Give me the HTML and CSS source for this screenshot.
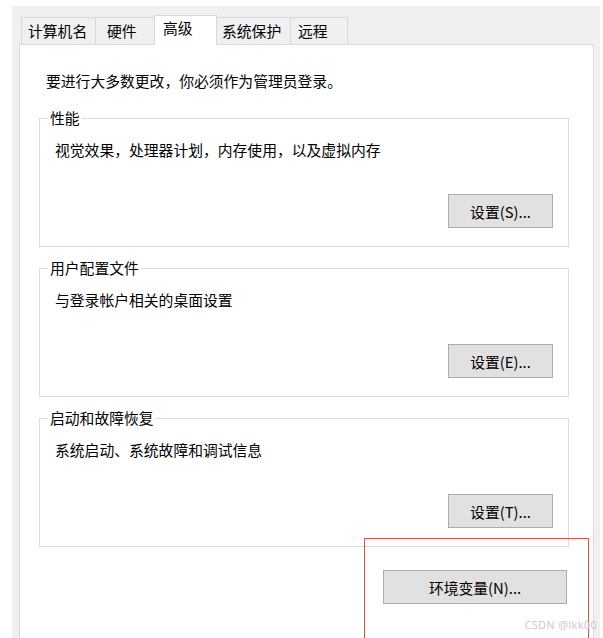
FILE: index.html
```html
<!DOCTYPE html>
<html lang="zh-CN">
<head>
    <meta charset="UTF-8">
    <meta name="viewport" content="width=device-width, initial-scale=1.0">
    <title>系统属性 - 高级</title>
    <link rel="stylesheet" href="styles.css">
</head>
<body>
    <div class="dialog">
        <div class="tabs">
            <div class="tab tab-name">计算机名</div>
            <div class="tab tab-hw">硬件</div>
            <div class="tab tab-adv active">高级</div>
            <div class="tab tab-prot">系统保护</div>
            <div class="tab tab-remote">远程</div>
        </div>

        <div class="panel">
            <p class="notice">要进行大多数更改，你必须作为管理员登录。</p>

            <fieldset class="group">
                <legend>性能</legend>
                <p class="desc">视觉效果，处理器计划，内存使用，以及虚拟内存</p>
                <div class="actions">
                    <button type="button" class="btn">设置(S)...</button>
                </div>
            </fieldset>

            <fieldset class="group">
                <legend>用户配置文件</legend>
                <p class="desc">与登录帐户相关的桌面设置</p>
                <div class="actions">
                    <button type="button" class="btn">设置(E)...</button>
                </div>
            </fieldset>

            <fieldset class="group">
                <legend>启动和故障恢复</legend>
                <p class="desc">系统启动、系统故障和调试信息</p>
                <div class="actions">
                    <button type="button" class="btn">设置(T)...</button>
                </div>
            </fieldset>

            <div class="env-row">
                <button type="button" class="btn btn-env">环境变量(N)...</button>
            </div>
        </div>
    </div>

    <div class="highlight"></div>
    <div class="watermark">CSDN @lkk00</div>
</body>
</html>
```

FILE: styles.css
```css
body {
    margin: 0;
    height: 638px;
    overflow: hidden;
    background: #ffffff;
    font-family: "Noto Sans CJK SC", "Microsoft YaHei", sans-serif;
    font-size: 14.8px;
    color: #000000;
}
.dialog {
    margin: 6px 0 0 12px;
    width: 588px;
    height: 632px;
    padding: 11px 0 0 7px;
    box-sizing: border-box;
    background: #f0f0f0;
    overflow: hidden;
}
.tabs {
    display: flex;
    align-items: flex-end;
    height: 27px;
    padding-left: 2px;
}
.tab {
    height: 27px;
    box-sizing: border-box;
    border: 1px solid #d9d9d9;
    border-bottom: none;
    border-right: none;
    line-height: 26px;
    background: #f0f0f0;
    white-space: nowrap;
}
.tab-name { width: 74px; padding-left: 6px; }
.tab-hw { width: 59px; padding-left: 11px; }
.tab-adv { width: 63px; padding-left: 8px; }
.tab-prot { width: 73px; padding-left: 5px; }
.tab-remote { width: 58px; padding-left: 7px; border-right: 1px solid #d9d9d9; }
.tab.active {
    position: relative;
    z-index: 1;
    height: 30px;
    margin-bottom: -1px;
    border-right: 1px solid #d9d9d9;
    line-height: 24px;
    background: #ffffff;
}
.tab.active + .tab {
    border-left: none;
}
.panel {
    width: 575px;
    height: 700px;
    box-sizing: border-box;
    border: 1px solid #d9d9d9;
    background: #ffffff;
}
.notice {
    margin: 0;
    padding: 27px 0 0 26px;
    line-height: 18px;
}
.group {
    width: 530px;
    box-sizing: border-box;
    min-width: 0;
    margin: 12px 0 0 19px;
    padding: 0 15px 18px 8px;
    border: 1px solid #dcdcdc;
}
.group:first-of-type {
    margin-top: 19px;
}
.group legend {
    padding: 0 2px;
    line-height: 18px;
}
.desc {
    margin: 0;
    padding: 14px 0 0 7px;
    line-height: 18px;
}
.actions {
    display: flex;
    justify-content: flex-end;
    margin-top: 35px;
}
.btn {
    width: 105px;
    height: 34px;
    padding: 0;
    border: 1px solid #adadad;
    background: #e1e1e1;
    font-family: inherit;
    font-size: 14.8px;
    color: #000000;
}
.env-row {
    display: flex;
    justify-content: flex-end;
    margin: 23px 26px 0 0;
}
.btn-env {
    width: 184px;
}
.highlight {
    position: absolute;
    left: 364px;
    top: 538px;
    width: 225px;
    height: 130px;
    box-sizing: border-box;
    border: 1px solid #ee4d4d;
}
.watermark {
    position: absolute;
    right: 6px;
    top: 617px;
    font-family: "Noto Sans", sans-serif;
    font-size: 11px;
    color: #cccccc;
    letter-spacing: 0.3px;
}
```
